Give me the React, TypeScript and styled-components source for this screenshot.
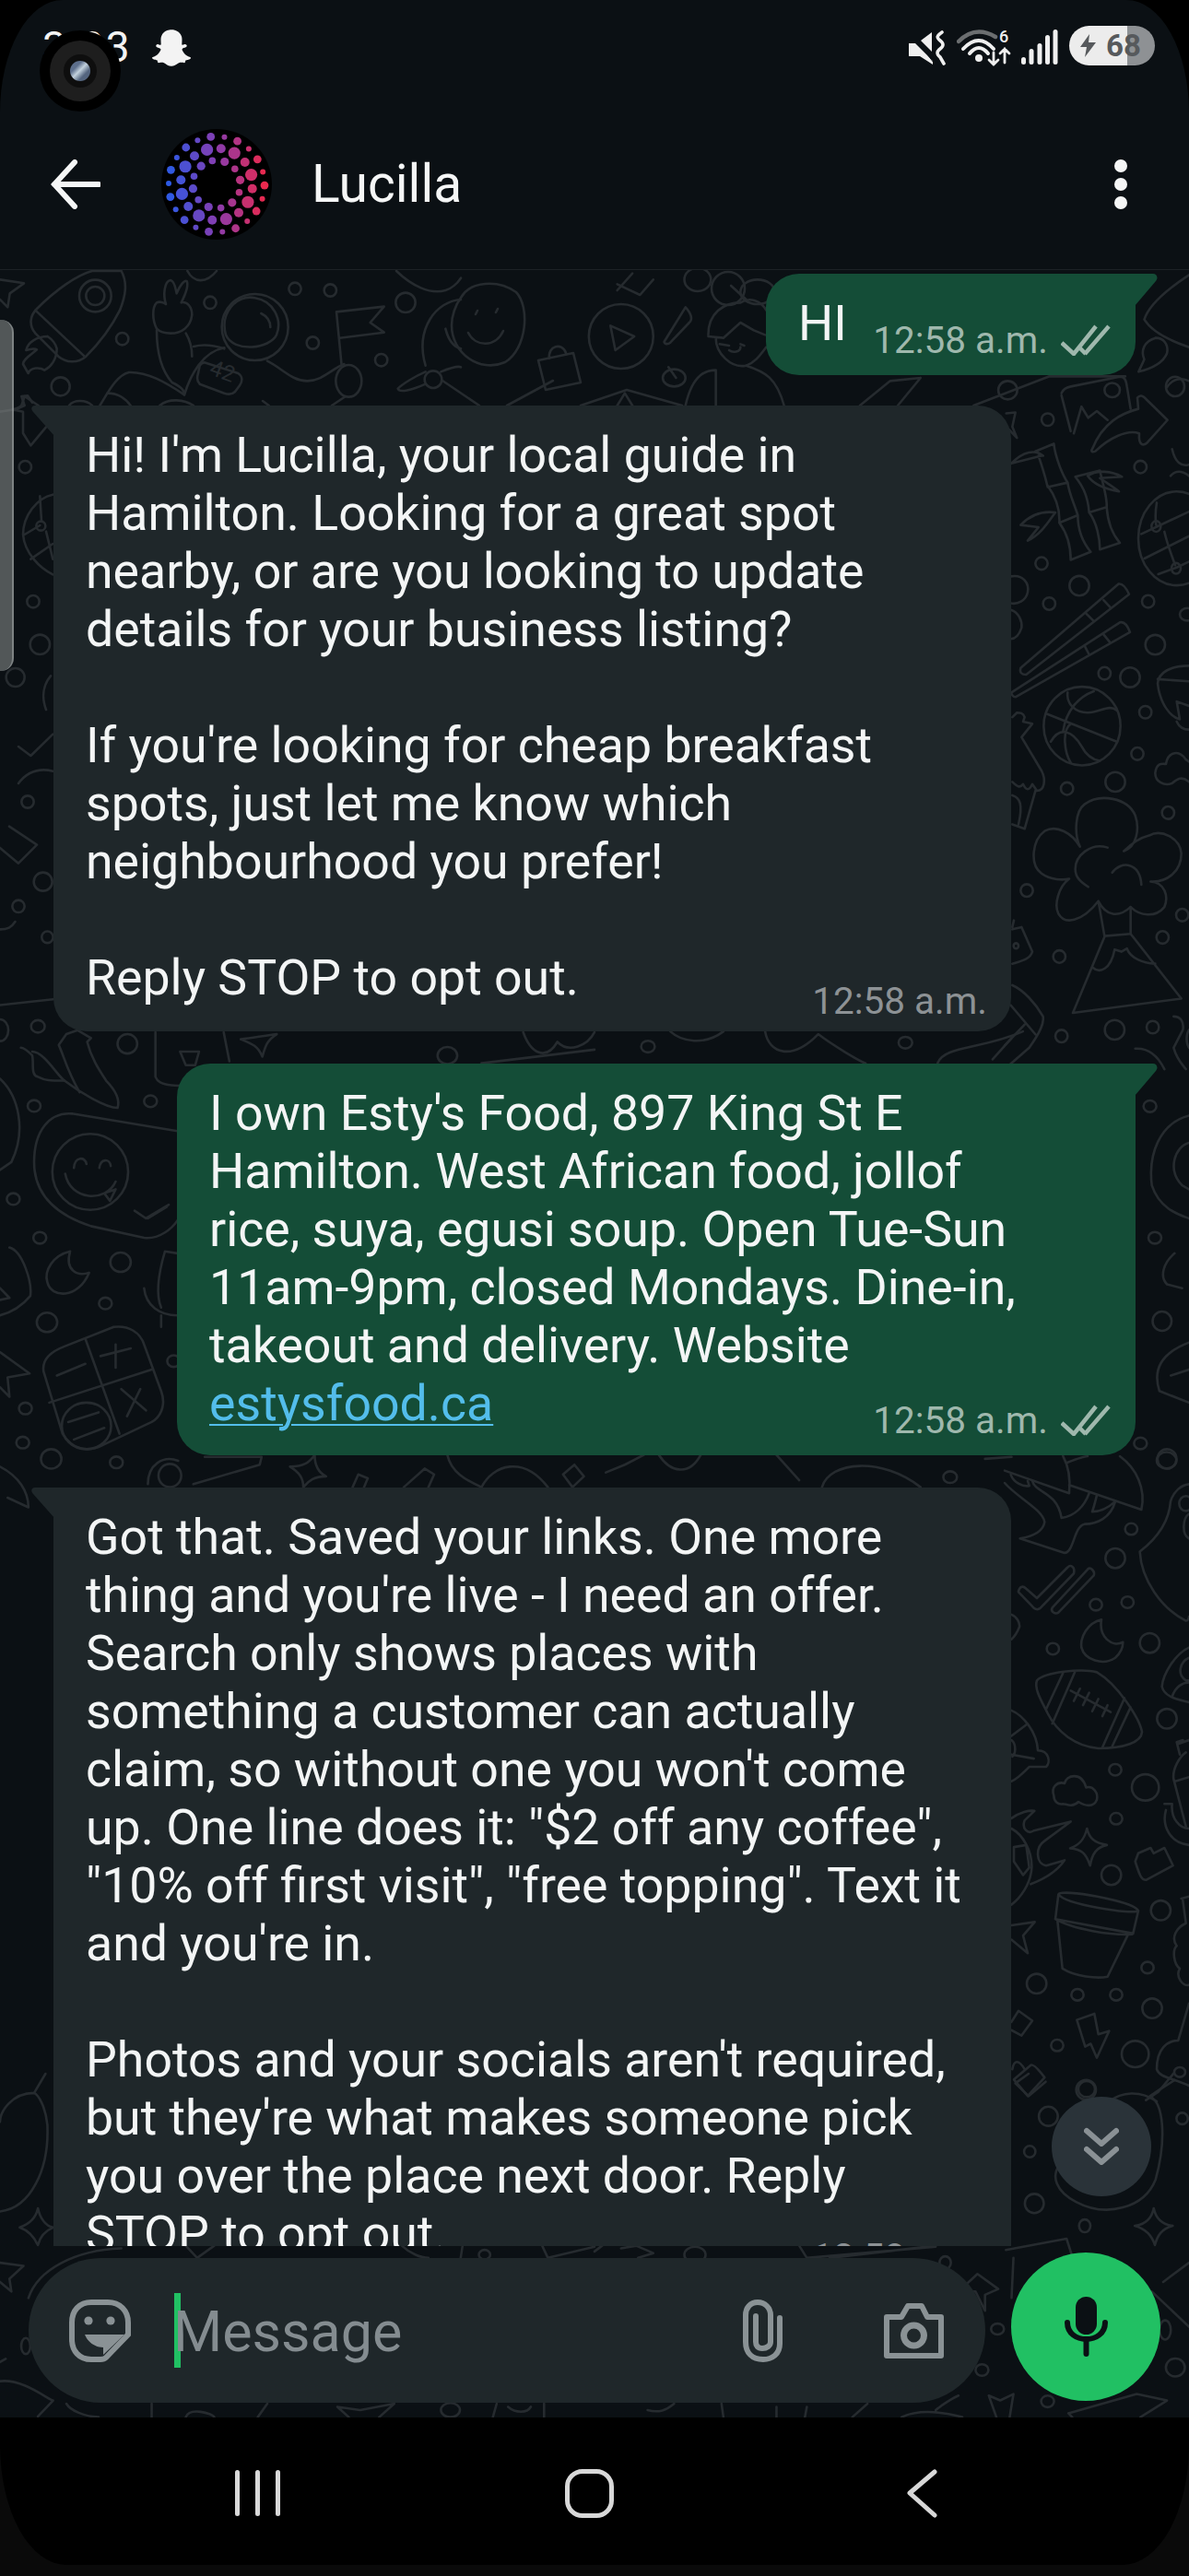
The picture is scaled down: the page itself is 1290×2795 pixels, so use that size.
import React from 'react'
import styled, { createGlobalStyle } from 'styled-components'
import { FaSnapchatGhost } from 'react-icons/fa'

const GlobalStyle = createGlobalStyle`
  html, body {
    margin: 0;
    padding: 0;
    background: #000;
  }
  * {
    box-sizing: border-box;
  }
`

const Page = styled.div`
  width: 1290px;
  height: 2795px;
  display: flex;
  flex-direction: column;
  overflow: hidden;
  position: relative;
  background: #000;
  font-family: Roboto, 'Liberation Sans', sans-serif;
`

/* header */
const Header = styled.header`
  height: 293px;
  flex: none;
  background: #0b1014;
  border-radius: 68px 68px 0 0 / 122px 122px 0 0;
  border-bottom: 1px solid #1c2125;
`

const StatusBar = styled.div`
  height: 107px;
  padding: 28px 37px 0 46px;
  display: flex;
  justify-content: space-between;
  align-items: flex-start;
`

const StatusLeft = styled.div`
  display: flex;
  align-items: flex-start;
  gap: 22px;
  color: #f3f3f3;
  font-size: 46px;
  line-height: 46px;
  letter-spacing: 2px;
  svg {
    margin-top: 3px;
    font-size: 42px;
  }
`

const StatusRight = styled.div`
  display: flex;
  align-items: flex-start;
  color: #efefef;
`

const Battery = styled.div<{ $level: number }>`
  width: 93px;
  height: 43px;
  margin-left: 12px;
  padding-left: 12px;
  display: flex;
  align-items: center;
  gap: 11px;
  border-radius: 22px;
  background: linear-gradient(90deg, #ececec ${(p) => p.$level}%, #8e9194 ${(p) => p.$level}%);
  color: #56595c;
  font-size: 33px;
  font-weight: 700;
  line-height: 43px;
`

const Camera = styled.div`
  position: absolute;
  left: 43px;
  top: 33px;
  width: 88px;
  height: 88px;
  border-radius: 50%;
  background: #000;
  display: flex;
  align-items: center;
  justify-content: center;
`

const CameraRing = styled.div`
  width: 66px;
  height: 66px;
  border-radius: 50%;
  background: #1e1e1e;
  display: flex;
  align-items: center;
  justify-content: center;
`

const CameraCore = styled.div`
  width: 36px;
  height: 36px;
  border-radius: 50%;
  background: #0e0e0e;
  display: flex;
  align-items: center;
  justify-content: center;
`

const CameraLens = styled.div`
  width: 22px;
  height: 22px;
  border-radius: 50%;
  background: linear-gradient(135deg, #5d6f8c 30%, #c3d2de 48%, #54657f 70%);
`

const AppBar = styled.div`
  height: 185px;
  padding: 0 67px 0 55px;
  display: flex;
  align-items: center;
`

const Avatar = styled.svg`
  width: 120px;
  height: 120px;
  margin-left: 66px;
  flex: none;
`

const Name = styled.div`
  margin-left: 43px;
  color: #f5f6f6;
  font-size: 57px;
  line-height: 64px;
`

const Kebab = styled.div`
  margin-left: auto;
  display: flex;
  flex-direction: column;
  gap: 6px;
`

const KebabDot = styled.span`
  width: 14px;
  height: 14px;
  border-radius: 50%;
  background: #f5f6f6;
`

/* chat */
const Chat = styled.main`
  flex: none;
  height: 2330px;
  position: relative;
  background: #0b1014;
`

const Wallpaper = styled.svg`
  position: absolute;
  inset: 0;
  width: 1290px;
  height: 2330px;
  fill: none;
  stroke: #262b2f;
  stroke-width: 2.6px;
  stroke-linecap: round;
  stroke-linejoin: round;
  * {
    vector-effect: non-scaling-stroke;
  }
`

const BadgeText = styled.text`
  fill: #262b2f;
  stroke: none;
  font-size: 24px;
  font-family: Roboto, sans-serif;
`

const List = styled.div`
  position: relative;
  height: 2144px;
  padding-top: 4px;
  overflow: hidden;
  display: flex;
  flex-direction: column;
`

const Row = styled.div<{ $out?: boolean; $gap: number }>`
  display: flex;
  flex: none;
  justify-content: ${(p) => (p.$out ? 'flex-end' : 'flex-start')};
  margin-top: ${(p) => p.$gap}px;
  padding: 0 58px;
`

const Bubble = styled.div<{ $out?: boolean; $inline?: boolean; $width: number }>`
  position: relative;
  width: ${(p) => p.$width}px;
  display: flex;
  flex-direction: ${(p) => (p.$inline ? 'row' : 'column')};
  padding: 22px ${(p) => (p.$out ? 27 : 26)}px ${(p) => (p.$out ? 18 : 13)}px 35px;
  border-radius: ${(p) => (p.$out ? '36px 0 36px 36px' : '0 36px 36px 36px')};
  background: ${(p) => (p.$out ? '#144d37' : '#1f272a')};
`

const BubbleText = styled.div`
  color: #f3f5f5;
  font-size: 53.65px;
  line-height: 63px;
  white-space: pre-line;
`

const LinkText = styled.a`
  color: #53bdeb;
  text-decoration: underline;
  text-decoration-thickness: 2px;
  text-underline-offset: 4px;
`

const Meta = styled.div<{ $out?: boolean; $inline?: boolean }>`
  display: flex;
  align-items: center;
  gap: 14px;
  height: 40px;
  font-size: 40.5px;
  line-height: 40px;
  white-space: nowrap;
  color: ${(p) => (p.$out ? '#9fb8ad' : '#8d9295')};
  align-self: ${(p) => (p.$inline ? 'flex-start' : 'flex-end')};
  margin: ${(p) => (p.$inline ? '30px 0 0 auto' : p.$out ? '-33px 0 0' : '-26px 0 0')};
`

const Tail = styled.svg<{ $out?: boolean }>`
  position: absolute;
  top: 0;
  width: 25px;
  height: 36px;
  ${(p) => (p.$out ? 'left: calc(100% - 1px);' : 'right: calc(100% - 1px);')}
  fill: ${(p) => (p.$out ? '#144d37' : '#1f272a')};
`

const Handle = styled.div`
  position: absolute;
  left: 0;
  top: 54px;
  width: 15px;
  height: 381px;
  border-radius: 0 14px 14px 0;
  background: rgba(126, 130, 130, 0.62);
  border-right: 2px solid rgba(170, 175, 175, 0.5);
`

const ScrollButton = styled.div`
  position: absolute;
  left: 1141px;
  top: 1982px;
  width: 108px;
  height: 108px;
  border-radius: 50%;
  background: #2a3339;
  display: flex;
  align-items: center;
  justify-content: center;
`

const ComposerRow = styled.div`
  position: relative;
  height: 186px;
  padding-left: 31px;
  display: flex;
  align-items: flex-start;
`

const Composer = styled.div`
  width: 1038px;
  height: 157px;
  margin-top: 13px;
  padding: 0 44px;
  border-radius: 79px;
  background: #1f272a;
  display: flex;
  align-items: center;
  color: #8a9295;
`

const Caret = styled.span`
  width: 7px;
  height: 81px;
  margin-left: 47px;
  flex: none;
  background: #21c063;
`

const Placeholder = styled.span`
  margin: 4px 0 0 -8px;
  color: #848c90;
  font-size: 61px;
  line-height: 59px;
`

const ClipIcon = styled.svg`
  width: 43px;
  height: 68px;
  margin-left: auto;
  fill: none;
  stroke: currentColor;
  stroke-width: 6;
  stroke-linecap: round;
`

const CameraIcon = styled.svg`
  width: 67px;
  height: 62px;
  margin-left: 109px;
  fill: none;
  stroke: currentColor;
  stroke-width: 6;
  stroke-linejoin: round;
`

const MicButton = styled.div`
  width: 162px;
  height: 161px;
  margin: 7px 0 0 28px;
  border-radius: 50%;
  background: #21c063;
  display: flex;
  align-items: center;
  justify-content: center;
`

/* android nav */
const NavShell = styled.div`
  flex: 1;
  background: #0a0a0a;
`

const Nav = styled.nav`
  height: 160px;
  padding: 4px 0 0 255px;
  display: flex;
  align-items: center;
  background: #000;
  border-radius: 0 0 72px 72px / 0 0 130px 130px;
`

const NavRecents = styled.svg`
  width: 49px;
  height: 50px;
`

const NavHome = styled.div`
  width: 53px;
  height: 53px;
  margin-left: 309px;
  border: 5px solid #d8d8d8;
  border-radius: 19px;
`

const NavBack = styled.svg`
  width: 33px;
  height: 53px;
  margin-left: 318px;
  fill: none;
  stroke: #d8d8d8;
  stroke-width: 5;
  stroke-linecap: round;
  stroke-linejoin: round;
`

type Doodle = {
  at: [number, number, number, number]
  paths: string[]
  rings: [number, number, number, number][]
}

const doodles: Doodle[] = [
  {
    // under the header, left
    at: [0, 290, 1 / 3, 1 / 3],
    paths: [
      'M120 135 C180 75 250 25 300 12 L395 12 C415 50 410 90 390 140 C360 200 320 250 280 290 C250 315 215 310 190 290 L115 215 C95 190 95 160 120 135 Z',
      'M115 140 L275 290',
      'M155 225 C120 225 90 245 85 270 C100 265 115 265 120 268 C100 285 75 300 75 315 L92 345 C100 325 130 325 145 335 C165 325 185 300 185 265 C180 245 170 235 155 225',
      'M0 40 L78 52 L32 85 L25 130 L0 105',
      'M735 220 C715 150 770 85 830 100 C890 110 920 170 900 220 C880 265 760 280 735 220',
      'M850 150 C870 160 880 175 880 195',
      'M510 200 C495 170 495 130 510 115 C520 110 535 115 540 120 C530 90 535 45 555 42 C570 45 572 75 575 85 C585 60 600 40 608 45 C615 60 600 95 590 115 C610 110 625 130 625 155 C620 195 590 215 555 215 C535 215 520 210 510 200',
      'M510 205 C510 270 520 330 560 375 C580 385 600 395 600 415 M605 215 C620 240 625 265 625 290 M630 258 C660 250 700 255 730 265',
      'M325 450 C350 410 380 350 420 342 C480 340 540 375 600 415 C620 350 660 275 730 262',
      'M665 310 L775 345 C790 355 790 370 780 385 L765 405 C755 415 745 415 730 410 L650 380 C640 370 640 360 645 345 L650 320 C655 312 660 310 665 310',
      'M870 305 C920 330 950 370 1000 370 C1050 370 1080 330 1120 315',
      'M1112 320 L1095 145 L1250 128 L1205 180 L1250 212 L1105 230',
      'M1125 420 L1080 450 M225 450 C240 430 280 430 300 450 M350 410 C390 410 410 430 425 450 M520 450 C550 425 600 430 630 450 M855 435 L875 450',
      'M1385 340 C1350 355 1310 380 1295 395 C1300 410 1340 400 1385 380 M1435 340 C1460 330 1490 320 1500 325 M1385 320 C1350 200 1420 110 1500 105 M1450 200 C1460 240 1480 260 1500 265',
      'M610 12 C630 50 670 55 705 12 M1290 12 C1340 60 1400 90 1450 75 C1470 70 1490 50 1500 35',
      'M0 470 C30 465 55 465 70 450 L80 420 L125 450',
    ],
    rings: [
      [310, 93, 52, 52], [310, 93, 30, 30], [398, 233, 20, 20], [197, 388, 30, 30], [684, 115, 20, 20],
      [960, 70, 20, 20], [1075, 75, 20, 20], [1018, 246, 20, 20], [1241, 302, 20, 20], [1320, 115, 32, 32],
      [830, 195, 108, 108], [1135, 370, 42, 52], [1410, 365, 28, 28],
    ],
  },
  {
    // around the first bubble
    at: [645, 0, 1 / 2.431, 1 / 3],
    paths: [
      'M42 1060 L105 1095 L55 1140 Z',
      'M185 1110 L240 1000 C255 1020 260 1040 250 1050 L200 1115 C190 1125 180 1115 185 1110',
      'M60 945 L100 890 M60 925 L120 960 L155 910',
      'M300 1090 C300 1020 340 985 385 985 C410 965 440 980 453 1010 M360 930 L400 975',
      'M300 1095 L340 1100 L385 1050 L420 1075 L450 1090 M320 1100 C320 1150 360 1200 400 1190 C425 1180 440 1150 453 1130',
      'M330 1120 L355 1125 M385 1120 L395 1125 M355 1140 C365 1150 385 1145 385 1130',
      'M240 1320 C260 1210 300 1205 320 1205 L320 1320 M500 1320 C480 1230 450 1210 400 1190 M195 1195 L215 1230',
      'M60 1320 L80 1280 L100 1320 M700 1320 L780 1240 L860 1230 M800 1320 L860 1230 M1000 1320 L1200 1225 L1400 1225',
      'M1568 895 C1500 950 1460 1000 1450 1040 C1470 1080 1520 1110 1568 1130',
      'M1480 1100 C1450 1110 1440 1140 1450 1170 L1435 1210 C1470 1200 1500 1180 1510 1150 C1515 1120 1500 1100 1480 1100',
      'M1568 1240 C1540 1225 1520 1240 1510 1260',
    ],
    rings: [[70, 1095, 85, 105], [272, 910, 35, 38], [430, 950, 45, 40], [210, 1230, 30, 28], [1090, 1270, 25, 30]],
  },
  {
    // smiley, lock and stray shapes left of the first outgoing bubble
    at: [480, 293, 1, 1],
    paths: [
      'M20 30 C30 12 60 10 80 24 C95 40 92 85 68 100 C40 112 10 90 10 60 C10 50 14 38 20 30',
      'M28 68 C36 84 58 84 66 66 M36 48 L38 44 M58 46 L60 42',
      'M104 98 L142 90 L150 122 L112 130 Z M116 96 C114 82 130 78 134 90',
      'M0 120 L40 147 M70 147 L120 120 M150 147 L200 130 L260 147',
    ],
    rings: [[310, 20, 18, 18]],
  },
  {
    // right gutter next to the long first bubble
    at: [1090, 400, 1 / 3, 1 / 2.063],
    paths: [
      'M185 55 C190 45 200 42 215 40 L375 18 C390 18 395 25 398 40 L410 90 M215 140 L185 60 M225 145 L250 85 L272 110 L300 95 L335 115',
      'M285 180 C320 120 380 100 435 90 L432 65 C440 58 450 60 460 68 L530 115 L465 165 C450 175 435 170 438 145 C400 135 340 155 295 185 C285 188 280 185 285 180 Z',
      'M545 180 C555 210 575 220 600 215 M540 240 C560 225 580 230 600 240',
      'M5 100 L35 98 L25 130 L40 155 L5 130',
      'M22 212 C60 185 100 180 125 195 L100 185 L160 168 C165 200 190 240 205 255 L140 265 C130 235 120 215 110 195 M140 262 C170 290 180 320 178 345 L238 328 C225 300 210 280 205 255 M178 345 C205 370 215 400 215 428 L280 410 C250 385 238 360 238 328 M22 212 L120 195',
      'M52 350 C80 330 120 318 165 322 C145 340 120 370 75 385 L110 355 L52 350',
      'M230 242 L310 228 C320 260 335 290 332 310 L275 322 C270 280 250 260 230 242 M275 322 C300 345 310 380 310 405 L375 390 C350 370 335 340 332 310',
      'M270 240 C300 225 350 230 382 242 L310 245 C330 255 355 265 372 275 C330 270 290 260 270 240',
      'M445 370 L600 320 M455 425 L600 375 M495 300 C490 320 490 335 493 350 M500 460 L560 445 L600 432 M520 365 C530 395 545 420 555 440',
      'M20 465 C60 460 80 480 75 500 C70 520 40 528 20 525 M20 540 C45 545 58 565 55 580 C45 600 30 605 20 605',
      'M52 670 L370 482 C385 480 395 490 405 505 L70 685 C55 685 48 680 52 670 M265 548 L290 565 M322 518 L345 535',
      'M22 725 L375 568 C390 565 400 575 408 590 L35 735 C28 735 22 730 22 725 M260 620 L275 640 M322 595 L342 612',
      'M135 772 L365 835 M205 725 C200 750 230 770 270 770 C310 770 340 750 365 765 M215 795 C185 810 195 860 215 882 M290 722 C240 735 200 765 190 812 M150 835 C180 800 220 810 250 845 C265 865 285 875 310 878',
      'M25 780 L40 770 C50 770 60 770 65 780 L60 790 L90 795 L55 825 L120 900 C135 920 130 945 105 945 L90 930 C80 945 70 945 60 930 C50 940 40 935 25 925 M100 945 L65 1030 L25 1020 M25 955 C50 960 60 975 45 1020',
      'M245 1070 C220 1040 170 1020 130 1035 C90 1055 80 1110 120 1130 C150 1145 190 1145 210 1142 C175 1160 160 1200 175 1220 C195 1245 250 1240 305 1192 L325 1270 L410 1265 L410 1205 C440 1225 490 1230 520 1205 C535 1180 520 1150 475 1148 C530 1150 575 1125 575 1085 C570 1050 510 1030 470 1045 C440 1050 410 1065 388 1080 C430 1070 440 1030 425 1000 C400 960 310 950 260 975 C230 990 225 1040 245 1070',
      'M335 1072 C280 1060 230 1090 230 1120 C230 1140 250 1150 272 1160 M350 1128 C380 1100 440 1105 445 1155 M305 1192 C330 1225 370 1230 410 1205',
      'M325 1272 L222 1442 L575 1410 L410 1265 M285 1340 C310 1355 345 1345 358 1300 L380 1305 L398 1298 C410 1320 450 1330 490 1332',
      'M25 1380 C60 1390 100 1420 125 1450 C130 1470 100 1500 80 1520 L0 1568 M20 1425 L100 1490 M65 1468 L0 1515',
      'M25 1255 L55 1250 L90 1305 C85 1320 60 1325 25 1332 M25 1250 L30 1235',
      'M425 1522 C470 1520 500 1540 520 1568 M550 1450 C570 1450 585 1460 580 1480 L550 1520 C560 1545 575 1555 590 1568 M600 1480 C590 1490 590 1510 600 1520',
      'M600 665 C540 665 500 680 498 705 C505 750 540 780 570 785 L560 745 L600 755 M498 695 L600 700 M560 790 C570 805 585 808 600 808',
      'M490 905 C495 880 515 885 525 885 C530 860 565 850 590 875 L600 880 M490 905 C490 925 520 935 545 928 C560 920 575 910 600 925',
    ],
    rings: [
      [350, 48, 25, 16], [140, 114, 20, 14], [555, 40, 30, 22], [442, 220, 20, 14], [560, 380, 125, 105], [493, 353, 15, 12],
      [558, 447, 15, 12], [120, 436, 20, 14], [243, 486, 32, 22], [145, 526, 20, 14], [467, 521, 20, 14], [595, 550, 25, 14],
      [490, 618, 32, 22], [325, 682, 20, 14], [408, 691, 32, 22], [458, 769, 20, 14], [432, 862, 20, 14], [360, 925, 32, 22],
      [203, 940, 20, 14], [532, 994, 20, 14], [72, 1168, 20, 14], [178, 1316, 20, 14], [514, 1273, 20, 14], [578, 1223, 20, 14],
      [358, 1480, 32, 22], [482, 1474, 20, 14], [185, 1494, 20, 14], [252, 800, 125, 88], [37, 1292, 8, 6],
    ],
  },
  {
    // left gutter beside the first bubble
    at: [0, 330, 1 / 3, 1 / 3],
    paths: [
      'M50 345 L75 350 L75 420 L100 460 L150 400 M45 345 L80 330 L70 300 L90 298 L105 320',
      'M172 620 C120 630 75 690 75 750 C80 810 130 860 172 880 M80 750 L130 720 M100 830 L172 780 M130 625 L135 705 M150 740 L172 830',
      'M165 1210 C140 1240 135 1280 150 1320',
      'M172 1400 L100 1470 L60 1440 M60 1560 C90 1520 130 1510 172 1520 M30 1700 L120 1760 L60 1820 L0 1770',
    ],
    rings: [[82, 530, 20, 20], [108, 968, 20, 20], [130, 1108, 32, 32], [50, 1215, 30, 30], [133, 722, 15, 15], [90, 1620, 20, 20], [140, 1880, 30, 30], [60, 1960, 20, 20]],
  },
  {
    // left of the second outgoing bubble
    at: [0, 1000, 1 / 2.431, 1 / 2.376],
    paths: [
      'M85 335 C115 335 150 395 170 410 C210 440 280 480 310 480 C320 450 290 420 280 410 C260 380 240 350 230 310 L240 300 L205 280 L175 290 L155 318 C170 350 175 380 210 440',
      'M55 325 C65 325 80 340 85 345 C90 365 80 395 100 400 C120 410 130 410 170 410',
      'M635 303 C665 300 690 295 730 290 C705 305 700 320 692 348 C680 320 665 315 635 303',
      'M410 285 L410 400 C420 425 450 425 600 425 M475 335 L525 335 L515 370 L490 370 Z M590 285 L605 360',
      'M0 405 C50 450 70 540 30 620 L0 640',
      'M90 620 C90 540 130 490 190 495 L468 540 M90 620 C90 690 130 750 240 785 L380 815 C420 820 455 790 468 770',
      'M172 650 C185 720 280 725 305 670 M195 635 C197 605 225 605 228 625 M262 635 C265 610 290 610 292 630 M275 700 L305 690 L290 720 Z M355 745 L385 765 L445 730 M390 765 L440 735',
      'M185 850 C140 860 115 900 125 930 C135 970 205 975 235 905 C205 915 170 900 185 850',
      'M435 850 C420 900 410 960 425 995 M468 855 L435 850 M380 945 C385 990 420 1015 468 1015 M425 1015 L425 1045',
      'M25 840 C60 850 85 930 80 965 C50 1000 20 1010 0 1015 M0 945 L25 970 L0 975',
      'M115 1160 C110 1130 130 1110 170 1095 L300 1045 C340 1040 370 1060 380 1090 L425 1210 C440 1250 420 1280 400 1290 L270 1350 C230 1370 190 1360 165 1320 Z',
      'M225 1075 L315 1320 M130 1240 L400 1155 M150 1170 L225 1140 M305 1090 L305 1150 M265 1120 L345 1100 M320 1205 L385 1260 M370 1205 L335 1275 M180 1290 L260 1265 M195 1335 L275 1305',
      'M0 1110 L78 1165 L20 1175 L25 1225 L0 1200',
      'M0 1405 C50 1430 75 1470 75 1510 L20 1485',
      'M390 1450 C390 1400 430 1375 470 1390 M540 1380 L690 1380 L685 1400 L510 1450',
      'M765 1405 C800 1405 815 1395 830 1375 C830 1400 840 1420 860 1430 C830 1430 815 1440 800 1458 C800 1435 790 1420 765 1405',
      'M930 1458 L945 1425 L970 1435 L960 1458 M1065 1458 L1120 1410 L1145 1425 L1130 1458 M1180 1375 C1190 1420 1230 1440 1270 1458 M1270 1458 C1300 1400 1380 1375 1445 1458 M1485 1425 L1515 1400 L1540 1430 L1510 1458 Z',
      'M0 215 L140 200 M1380 285 C1400 340 1440 360 1470 310 C1500 340 1550 320 1568 285 M1270 365 L1568 330',
      'M0 20 C20 20 30 15 40 0',
    ],
    rings: [
      [100, 270, 18, 16], [336, 315, 26, 25], [1180, 345, 26, 22], [90, 475, 17, 15], [397, 463, 17, 15], [35, 715, 17, 15],
      [105, 815, 17, 15], [318, 878, 27, 25], [278, 984, 17, 15], [124, 1033, 27, 25], [458, 1133, 17, 15], [67, 1255, 17, 15],
      [60, 1343, 17, 15], [135, 1385, 27, 25], [307, 1394, 17, 15], [125, 40, 15, 15], [0, 280, 22, 28], [238, 645, 100, 98],
      [228, 1300, 65, 60], [448, 1428, 30, 30],
    ],
  },
  {
    // right of the second outgoing bubble
    at: [645, 1000, 1 / 2.431, 1 / 2.376],
    paths: [
      'M200 283 C230 310 290 320 340 283 M450 283 C460 340 520 360 590 290 C630 320 700 360 715 365 M905 365 C920 320 1020 330 1130 283 M1050 355 L1100 300',
      'M1568 500 C1490 520 1460 600 1470 680 C1490 740 1540 755 1568 765 M1568 570 C1530 580 1510 640 1550 680 L1568 690',
      'M1530 855 C1500 880 1490 915 1510 935 L1550 945',
      'M1568 1085 C1500 1110 1470 1150 1490 1210 L1568 1240 M1520 1170 L1568 1155',
      'M30 1420 L80 1400 L130 1375 M600 1458 C620 1390 760 1380 860 1458 M1030 1385 L1100 1380 M170 1375 C200 1420 250 1430 280 1375 M480 1375 L540 1440',
    ],
    rings: [[141, 322, 18, 15], [820, 312, 18, 15], [1465, 476, 17, 15], [1478, 815, 17, 15], [1497, 1030, 25, 25], [1440, 1345, 17, 15], [1510, 1385, 25, 25], [938, 1432, 18, 15]],
  },
  {
    // right gutter next to the last bubble
    at: [1090, 1580, 1 / 3, 1 / 2.24],
    paths: [
      'M0 35 L210 90 C215 50 205 20 190 0 M210 70 L445 130 C460 80 430 30 375 0 M205 15 C240 5 260 0 270 0',
      'M20 45 C30 65 60 75 80 72 L75 60 M90 60 C100 90 170 85 185 150 C230 145 260 120 275 90 M300 95 C295 110 290 125 285 135 C320 135 345 120 360 110 C345 150 300 165 260 165 C225 170 225 235 195 235 L50 200 C90 195 125 185 130 160 C125 130 40 100 0 65',
      'M45 328 C50 315 60 315 70 322 L105 345 L205 270 C215 262 230 270 225 285 L115 370 C105 375 95 370 90 365 L45 330 Z M155 368 L270 275 C280 268 295 280 290 290 L175 380 C165 385 148 378 155 368',
      'M315 397 C270 405 245 440 250 465 C260 495 320 510 360 490 C375 480 385 465 385 452 C350 465 305 440 315 397',
      'M105 545 C130 525 250 515 300 525 C370 555 440 640 447 670 C445 695 390 710 305 710 C230 705 170 670 140 625 C120 595 95 565 105 545 Z M190 527 L135 615 M230 522 L155 650 M390 588 L318 708 M410 610 L350 705 M215 570 L345 622 M245 565 L225 595 M275 575 L255 605 M305 590 L285 620 M335 605 L318 632',
      'M160 825 C150 805 170 790 195 795 C200 775 250 765 265 805 C290 800 305 820 300 835 C290 855 260 850 240 840 C220 855 200 845 190 845 C175 848 160 840 160 825',
      'M268 905 C275 930 295 940 333 945 C300 950 285 965 278 995 C265 965 250 955 213 953 C245 945 260 930 268 905',
      'M425 985 L435 965 L475 952 L485 965 L520 952 L548 995 L460 1030 C445 1030 440 1020 425 985',
      'M175 1065 C180 1050 420 1080 435 1105 L418 1160 L165 1125 Z M175 1065 C200 1090 420 1115 435 1105 M165 1125 C220 1150 350 1165 415 1162 M172 1130 L188 1245 C230 1265 300 1270 335 1265 L400 1165',
      'M235 1370 L292 1355 L305 1405 L340 1397 L300 1462 L280 1428 L262 1435 Z',
      'M22 905 C60 920 90 960 88 1000 C85 1040 50 1075 22 1090 M30 950 L70 945 L80 1000 L60 1018 L30 985 Z',
      'M22 880 C50 865 80 860 97 862 L65 885 C55 905 75 920 95 910 L215 888 L130 935 C100 950 100 990 135 995 L195 982 C170 1010 120 1030 85 1040',
      'M22 1140 L98 1132 L60 1165 L75 1208 L22 1175 M22 1375 L45 1348 L90 1372 L55 1408 L22 1395',
      'M30 1515 L85 1480 C90 1478 100 1480 130 1510 L75 1555 L30 1515 M25 1490 C30 1468 45 1465 65 1490',
      'M22 618 C60 630 105 670 108 715 C145 715 150 745 135 755 L80 755 C60 770 40 785 22 790 M22 680 L75 650 M22 725 L95 735 M22 690 C40 700 35 725 25 730',
      'M22 385 C40 390 50 405 48 415 C40 430 30 440 22 445',
      'M600 68 C575 70 550 85 540 110 C535 160 495 200 440 232 C445 300 510 370 590 400 C595 400 600 395 600 390 M600 140 C580 150 575 190 600 200',
      'M600 465 C555 480 515 530 512 560 C520 585 560 590 600 598 M600 490 C570 500 560 530 590 545 L600 545 M545 585 C555 560 580 550 600 550',
      'M562 700 L600 690 M570 725 L560 695 L580 690 M590 720 C570 730 545 760 550 785 L590 900 M555 790 L600 780',
      'M520 845 L545 845 C540 880 570 905 600 905 M525 860 C510 900 540 940 600 945',
      'M575 1075 L600 1070 M580 1080 L590 1135 C560 1145 540 1170 560 1190 C545 1200 550 1235 570 1245 C555 1265 580 1290 600 1285',
      'M600 1330 L565 1420 C530 1420 495 1440 495 1490 C505 1510 540 1510 600 1530 M550 1500 L500 1545 L460 1565 M340 1568 C380 1545 440 1540 495 1568',
    ],
    rings: [
      [412, 177, 20, 14], [360, 248, 32, 24], [297, 361, 20, 14], [400, 355, 20, 14], [157, 468, 20, 14], [472, 454, 32, 24],
      [528, 638, 32, 24], [360, 762, 20, 14], [458, 805, 44, 32], [363, 881, 20, 14], [347, 1018, 32, 24], [508, 1104, 32, 24],
      [465, 1243, 20, 14], [237, 1309, 20, 14], [363, 1309, 20, 14], [480, 1342, 32, 24], [104, 1282, 32, 24], [171, 1432, 20, 14],
      [425, 1453, 44, 32], [265, 1540, 32, 24], [527, 10, 32, 20], [590, 115, 22, 18], [570, 1497, 18, 12],
    ],
  },
  {
    // composer band, left half
    at: [0, 2250, 1 / 2.431, 1 / 2.877],
    paths: [
      'M120 0 L90 60 C30 60 0 120 0 150 M0 430 C80 420 130 300 125 160 C120 100 100 65 90 60',
      'M100 420 C105 450 120 475 140 480 C120 490 105 510 100 535 C90 510 75 490 52 480 C75 470 95 450 100 420',
      'M0 590 L62 600 L25 640 L30 680 L0 650 M75 700 C100 610 200 550 320 545 M0 900 L15 890 M0 960 C60 950 130 1020 140 1020 L100 1070',
      'M175 1030 C185 1050 220 1070 260 1072 M400 1072 L400 1030 M490 1072 C500 1040 560 1060 565 1072 M680 1072 L705 1030 M890 1040 L950 1050 L1040 1030 L1000 1072 M920 1072 L890 1040 M1300 1072 L1310 1030 M1435 1030 L1435 1072 M1340 1040 C1360 1060 1390 1060 1400 1040',
      'M490 537 L520 575 L565 537 M1220 537 L1215 575 M1060 537 C1080 560 1110 575 1130 575 M1430 537 L1445 575 L1568 540',
    ],
    rings: [[68, 850, 12, 25], [1188, 1050, 25, 22], [1278, 565, 15, 15]],
  },
  {
    // composer band, right half
    at: [645, 2250, 1 / 2.431, 1 / 2.877],
    paths: [
      'M0 555 L20 537 M70 545 L110 537 L155 560 L115 575 M540 537 L560 575 L900 540 M620 575 L900 537',
      'M1085 550 L1245 515 L1260 570 L1240 575 M1105 575 L1100 700',
      'M1010 625 L1065 672 L1030 690 L1030 740 L1005 680 L960 680 Z',
      'M1500 650 L1568 590 M1470 680 L1568 790',
      'M140 1050 C170 1060 190 1050 210 1030 M340 1072 L335 1030 M480 1072 L480 1040 M555 1072 L560 1040 M680 1072 L720 1030 M810 1072 C850 1050 900 1050 970 1072 M900 1050 C920 1030 950 1010 960 1005',
      'M1040 1005 L1070 1020 L1105 1000 L1095 1072 M1040 1005 L1060 1072 M1250 1060 L1430 1000 L1510 1020 L1440 1072 M1250 1060 L1260 1072',
      'M1465 70 L1490 50 L1530 20 M1465 70 C1500 90 1510 200 1480 330 C1450 420 1350 450 1270 400 C1220 370 1200 320 1230 280',
      'M1475 420 C1480 450 1495 470 1525 475 C1495 485 1485 505 1478 535 C1470 505 1455 485 1425 475 C1455 470 1470 450 1475 420',
      'M1110 30 L1145 0 M1145 70 L1190 25 M1145 70 L1110 30',
    ],
    rings: [
      [265, 565, 28, 25], [1063, 797, 17, 17], [1022, 925, 17, 18], [1195, 1023, 17, 18], [1532, 917, 25, 28], [1505, 800, 15, 30],
      [1197, 133, 25, 30], [1148, 243, 15, 18], [1160, 405, 25, 30], [1293, 475, 15, 20], [1298, 48, 22, 25], [1550, 140, 15, 18], [925, 590, 15, 20],
    ],
  },
]

const mix = (a: number[], b: number[], t: number) =>
  `rgb(${a.map((v, i) => Math.round(v + (b[i] - v) * t)).join(',')})`

// the logo runs blue on the left through purple to red on the right
const dotColor = (x: number) => {
  const t = (x + 55) / 110
  return t < 0.5
    ? mix([40, 92, 232], [135, 60, 175], t * 2)
    : mix([135, 60, 175], [240, 40, 72], (t - 0.5) * 2)
}

const logoRings = [
  { radius: 52, count: 22, big: 4.4, small: 3 },
  { radius: 39, count: 16, big: 6.6, small: 5 },
  { radius: 26, count: 12, big: 4.6, small: 3.8 },
]

const LucillaLogo = () => (
  <Avatar viewBox="-60 -60 120 120">
    <circle r="60" fill="#000" />
    {logoRings.map((ring) =>
      Array.from({ length: ring.count }, (_, i) => {
        const angle = (i / ring.count) * Math.PI * 2 + ring.radius
        const x = Math.cos(angle) * ring.radius
        const y = Math.sin(angle) * ring.radius
        return (
          <circle
            key={`${ring.radius}-${i}`}
            cx={x}
            cy={y}
            r={i % 2 ? ring.small : ring.big}
            fill={dotColor(x)}
          />
        )
      }),
    )}
  </Avatar>
)

const DoubleTick = () => (
  <svg width="54" height="34" viewBox="0 0 54 34" fill="none" stroke="currentColor" strokeWidth="4.5">
    <path d="M1 20 L14 32 L38 2" />
    <path d="M26 32 L52 2 M20 25 L27 32" />
  </svg>
)

const MuteIcon = () => (
  <svg width="42" height="38" viewBox="0 0 42 38" style={{ marginTop: 5 }}>
    <path d="M1 14 H8 L27 33 V37 L13 28 H1 Z M14 11 L26 2 V23 Z" fill="currentColor" />
    <path d="M3 2 L28 35" stroke="#0b1014" strokeWidth="1" />
    <path
      d="M37 2 C31 6 31 8 35 11 C39 14 39 17 35 20 C31 23 31 26 35 29 L39 36"
      fill="none"
      stroke="currentColor"
      strokeWidth="3.6"
      strokeLinecap="round"
    />
  </svg>
)

const WifiIcon = () => (
  <svg width="62" height="42" viewBox="0 0 62 42" style={{ marginLeft: 11, marginTop: 2 }} fill="none" strokeLinecap="round">
    <path d="M2 15 Q20 -3 42 10" stroke="#6b6e70" strokeWidth="4.5" />
    <path d="M7 23 Q24 5 40 23 M14 28 Q24 16 34 28" stroke="currentColor" strokeWidth="4" />
    <circle cx="24" cy="33" r="4" fill="currentColor" />
    <text x="46" y="16" fontSize="18" fontWeight="500" fill="currentColor" fontFamily="Roboto, sans-serif">
      6
    </text>
    <path d="M40 27 V40 M35 35 L40 40 L45 35 M52 38 V23 M47 28 L52 23 L57 28" stroke="currentColor" strokeWidth="2.8" />
  </svg>
)

const SignalIcon = () => (
  <svg width="40" height="42" viewBox="0 0 40 42" style={{ marginLeft: 8 }} fill="currentColor">
    <rect x="0" y="34" width="5" height="8" rx="2.5" />
    <rect x="8.5" y="25" width="5" height="17" rx="2.5" />
    <rect x="17.5" y="19" width="5" height="23" rx="2.5" />
    <rect x="26" y="10" width="5" height="32" rx="2.5" />
    <rect x="34.5" y="4" width="5" height="38" rx="2.5" />
  </svg>
)

const StickerIcon = () => (
  <svg width="67" height="68" viewBox="0 0 67 68" fill="none" style={{ flex: 'none' }}>
    <path
      d="M24 3 H42 C55 3 64 12 64 25 V38 L40 63 C38 65 36 65 34 65 H24 C11 65 3 56 3 43 V25 C3 12 11 3 24 3 Z"
      stroke="currentColor"
      strokeWidth="6"
    />
    <circle cx="21" cy="23" r="4.6" fill="currentColor" />
    <circle cx="45" cy="23" r="4.6" fill="currentColor" />
    <path d="M17 38 H60 L37 60 V52 C28 52 20 46 17 38 Z" fill="currentColor" />
  </svg>
)

const BubbleTail = ({ out }: { out?: boolean }) =>
  out ? (
    <Tail $out viewBox="0 0 25 36">
      <path d="M0 0 H20 C24 0 26 4 23 8 L0 35 Z" />
    </Tail>
  ) : (
    <Tail viewBox="0 0 25 36">
      <path d="M25 0 H4 C0 0 -1 4 2 7 L25 33 Z" />
    </Tail>
  )

const App = () => {
  return (
    <Page>
      <GlobalStyle />
      <Header>
        <StatusBar>
          <StatusLeft>
            3:03
            <FaSnapchatGhost />
          </StatusLeft>
          <StatusRight>
            <MuteIcon />
            <WifiIcon />
            <SignalIcon />
            <Battery $level={68}>
              <svg width="17" height="25" viewBox="0 0 17 25" fill="currentColor">
                <path d="M10 0 L0 14 H7 L5 25 L17 9 H9 Z" />
              </svg>
              68
            </Battery>
          </StatusRight>
        </StatusBar>
        <AppBar>
          <svg width="54" height="54" viewBox="0 0 54 54" fill="none" stroke="#f5f6f6" strokeWidth="6" strokeLinecap="round">
            <path d="M52 27 H4 M26 3 L4 27 L26 51" />
          </svg>
          <LucillaLogo />
          <Name>Lucilla</Name>
          <Kebab>
            <KebabDot />
            <KebabDot />
            <KebabDot />
          </Kebab>
        </AppBar>
      </Header>
      <Camera>
        <CameraRing>
          <CameraCore>
            <CameraLens />
          </CameraCore>
        </CameraRing>
      </Camera>

      <Chat>
        <Wallpaper viewBox="0 293 1290 2330">
          {doodles.map((d) => (
            <g key={d.at.join()} transform={`translate(${d.at[0]} ${d.at[1]}) scale(${d.at[2]} ${d.at[3]})`}>
              {d.paths.map((p) => (
                <path key={p} d={p} />
              ))}
              {d.rings.map(([cx, cy, rx, ry]) => (
                <ellipse key={`${cx}-${cy}-${rx}`} cx={cx} cy={cy} rx={rx} ry={ry} />
              ))}
            </g>
          ))}
          <BadgeText x="226" y="410" transform="rotate(20 238 408)">
            42
          </BadgeText>
        </Wallpaper>

        <List>
          <Row $out $gap={0}>
            <Bubble $out $inline $width={401}>
              <BubbleTail out />
              <BubbleText>HI</BubbleText>
              <Meta $out $inline>
                12:58 a.m.
                <DoubleTick />
              </Meta>
            </Bubble>
          </Row>
          <Row $gap={33}>
            <Bubble $width={1039}>
              <BubbleTail />
              <BubbleText>
                {`Hi! I'm Lucilla, your local guide in
Hamilton. Looking for a great spot
nearby, or are you looking to update
details for your business listing?

If you're looking for cheap breakfast
spots, just let me know which
neighbourhood you prefer!

Reply STOP to opt out.`}
              </BubbleText>
              <Meta>12:58 a.m.</Meta>
            </Bubble>
          </Row>
          <Row $out $gap={35}>
            <Bubble $out $width={1040}>
              <BubbleTail out />
              <BubbleText>
                {`I own Esty's Food, 897 King St E
Hamilton. West African food, jollof
rice, suya, egusi soup. Open Tue-Sun
11am-9pm, closed Mondays. Dine-in,
takeout and delivery. Website
`}
                <LinkText>estysfood.ca</LinkText>
              </BubbleText>
              <Meta $out>
                12:58 a.m.
                <DoubleTick />
              </Meta>
            </Bubble>
          </Row>
          <Row $gap={35}>
            <Bubble $width={1039}>
              <BubbleTail />
              <BubbleText>
                {`Got that. Saved your links. One more
thing and you're live - I need an offer.
Search only shows places with
something a customer can actually
claim, so without one you won't come
up. One line does it: "$2 off any coffee",
"10% off first visit", "free topping". Text it
and you're in.

Photos and your socials aren't required,
but they're what makes someone pick
you over the place next door. Reply
STOP to opt out.`}
              </BubbleText>
              <Meta>12:58 a.m.</Meta>
            </Bubble>
          </Row>
        </List>

        <ComposerRow>
          <Composer>
            <StickerIcon />
            <Caret />
            <Placeholder>Message</Placeholder>
            <ClipIcon viewBox="0 0 43 68">
              <path d="M40 20 V48 C40 59 32 65 22 65 C10 65 3 58 3 46 V17 C3 9 8 3 16 3 C24 3 30 9 30 17 V46 C30 50 26 53 21 53 C16 53 14 50 14 46 V18" />
            </ClipIcon>
            <CameraIcon viewBox="0 0 67 62">
              <path d="M4 16 H20 L27 4 H42 L48 16 H63 V58 H4 Z" />
              <circle cx="33.5" cy="36" r="11" strokeWidth="7" />
            </CameraIcon>
          </Composer>
          <MicButton>
            <svg width="47" height="66" viewBox="0 0 47 66" fill="none" stroke="#0b1014" strokeLinecap="round">
              <rect x="12" y="0" width="23" height="41" rx="11.5" fill="#0b1014" stroke="none" />
              <path d="M3 28 C3 52 44 52 44 28" strokeWidth="6" />
              <path d="M23.5 46 V62" strokeWidth="6" />
            </svg>
          </MicButton>
        </ComposerRow>

        <Handle />
        <ScrollButton>
          <svg width="38" height="42" viewBox="0 0 38 42" fill="none" stroke="#8a9195" strokeWidth="6" strokeLinecap="round" strokeLinejoin="round">
            <path d="M3 4 L19 18 L35 4 M3 24 L19 38 L35 24" />
          </svg>
        </ScrollButton>
      </Chat>

      <NavShell>
        <Nav>
          <NavRecents viewBox="0 0 49 50" fill="#d8d8d8">
            <rect x="0" y="0" width="5" height="50" rx="2.5" />
            <rect x="22" y="0" width="5" height="50" rx="2.5" />
            <rect x="44" y="0" width="5" height="50" rx="2.5" />
          </NavRecents>
          <NavHome />
          <NavBack viewBox="0 0 33 53">
            <path d="M30 3 L3 26 L30 50" />
          </NavBack>
        </Nav>
      </NavShell>
    </Page>
  )
}

export default App
